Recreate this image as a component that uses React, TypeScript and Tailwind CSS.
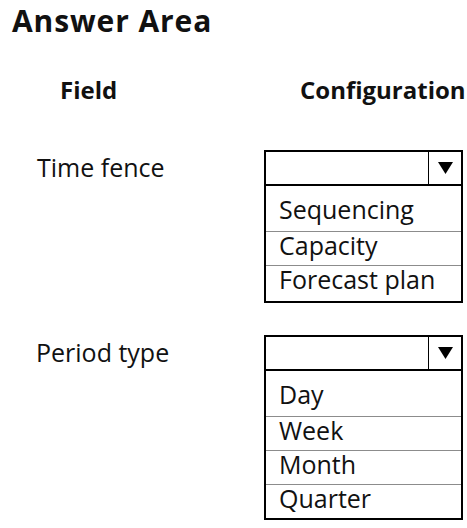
import React from "react";

function Dropdown({ items, lastH }: { items: string[]; lastH: string }) {
  return (
    <div className="w-[199px] border-2 border-black bg-white">
      <div className="flex h-[34px] border-b-2 border-black">
        <div className="flex-1" />
        <div className="flex w-[33px] items-center justify-center border-l-[1.5px] border-black">
          <svg width="15" height="12" viewBox="0 0 15 12">
            <polygon points="0,0 15,0 7.5,12" fill="#000" />
          </svg>
        </div>
      </div>
      {items.map((it, i) => {
        const last = i === items.length - 1;
        if (i === 0)
          return (
            <div key={it} className="h-[45px] pl-[13px] pt-[11px] text-[25px] leading-none">
              {it}
            </div>
          );
        return (
          <div
            key={it}
            className={
              (last ? lastH : "h-[34px]") +
              " border-t border-[#8c8c8c] pl-[13px] pt-[1px] text-[25px] leading-none"
            }
          >
            {it}
          </div>
        );
      })}
    </div>
  );
}

export default function App() {
  return (
    <div
      className="relative h-[528px] w-[467px] overflow-hidden bg-white text-[#111]"
      style={{ fontFamily: "'Open Sans', sans-serif" }}
    >
      <h1 className="pl-[12px] pt-[6px] text-[30px] font-bold leading-none tracking-[0.9px]">Answer Area</h1>
      <div className="mt-[42px] flex text-[24px] font-bold leading-none">
        <div className="w-[300px] pl-[60px]">Field</div>
        <div>Configuration</div>
      </div>
      <div className="mt-[48px] flex">
        <div className="w-[264px] pl-[37px] pt-[5px] text-[25px] leading-none">Time fence</div>
        <Dropdown items={["Sequencing", "Capacity", "Forecast plan"]} lastH="h-[36px]" />
      </div>
      <div className="mt-[32px] flex">
        <div className="w-[264px] pl-[36px] pt-[5px] text-[25px] leading-none">Period type</div>
        <Dropdown items={["Day", "Week", "Month", "Quarter"]} lastH="h-[34px]" />
      </div>
    </div>
  );
}
